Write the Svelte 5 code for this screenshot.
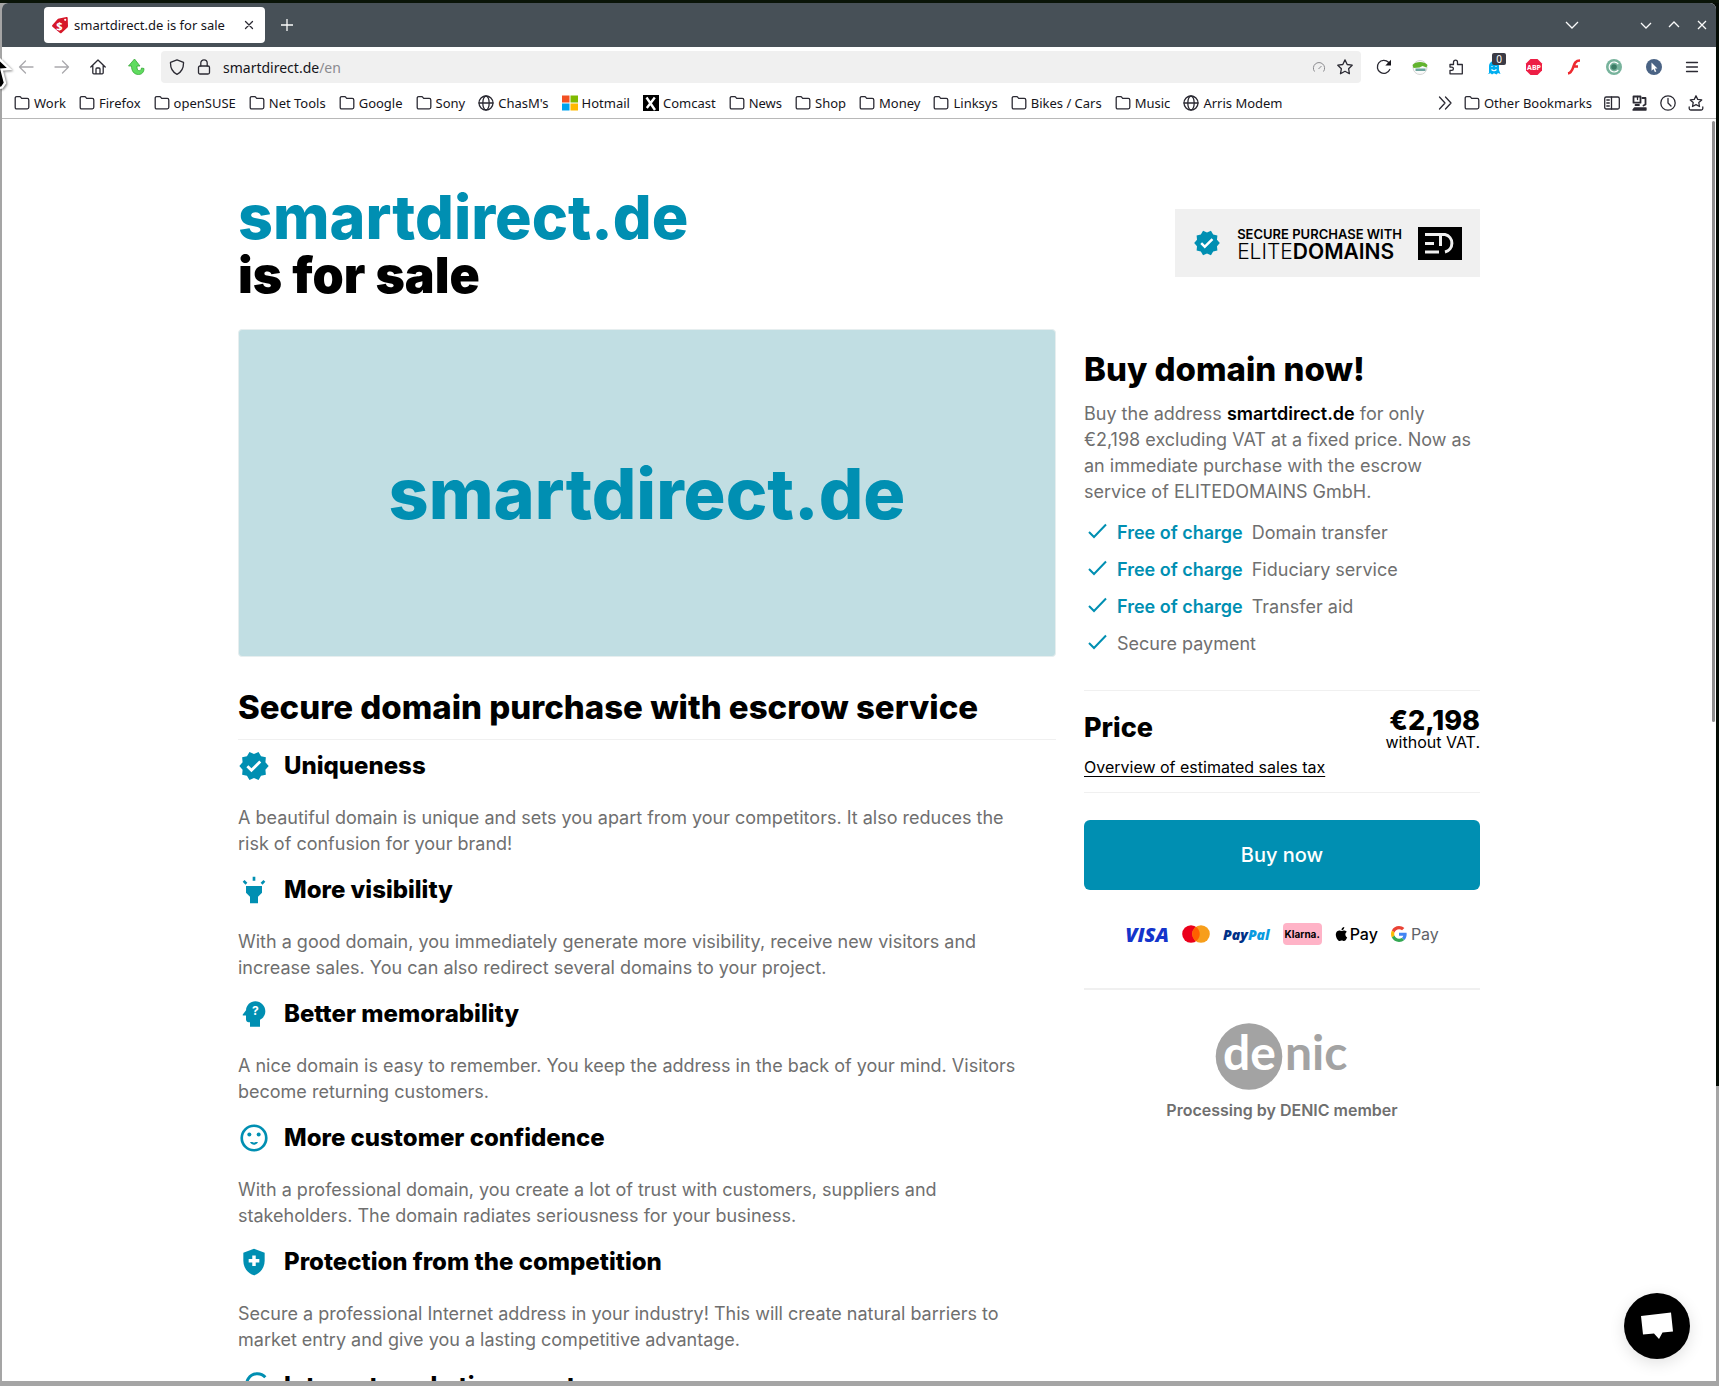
<script>
    const domain = 'smartdirect.de';

    const bookmarks = [
        { name: 'Work' },
        { name: 'Firefox' },
        { name: 'openSUSE' },
        { name: 'Net Tools' },
        { name: 'Google' },
        { name: 'Sony' },
        { name: "ChasM's", icon: 'globe' },
        { name: 'Hotmail', icon: 'windows' },
        { name: 'Comcast', icon: 'comcast' },
        { name: 'News' },
        { name: 'Shop' },
        { name: 'Money' },
        { name: 'Linksys' },
        { name: 'Bikes / Cars' },
        { name: 'Music' },
        { name: 'Arris Modem', icon: 'globe' }
    ];

    const reasons = [
        {
            icon: 'verified',
            title: 'Uniqueness',
            text: 'A beautiful domain is unique and sets you apart from your competitors. It also reduces the risk of confusion for your brand!'
        },
        {
            icon: 'highlight',
            title: 'More visibility',
            text: 'With a good domain, you immediately generate more visibility, receive new visitors and increase sales. You can also redirect several domains to your project.'
        },
        {
            icon: 'mind',
            title: 'Better memorability',
            text: 'A nice domain is easy to remember. You keep the address in the back of your mind. Visitors become returning customers.'
        },
        {
            icon: 'smile',
            title: 'More customer confidence',
            text: 'With a professional domain, you create a lot of trust with customers, suppliers and stakeholders. The domain radiates seriousness for your business.'
        },
        {
            icon: 'shield',
            title: 'Protection from the competition',
            text: 'Secure a professional Internet address in your industry! This will create natural barriers to market entry and give you a lasting competitive advantage.'
        },
        { icon: 'google', title: 'Internet marketing asset', text: '' }
    ];

    const benefits = [
        { free: true, text: 'Domain transfer' },
        { free: true, text: 'Fiduciary service' },
        { free: true, text: 'Transfer aid' },
        { free: false, text: 'Secure payment' }
    ];
</script>

{#snippet verified(size)}
    <svg width={size} height={size} viewBox="0 0 24 24" fill="#008fb2" aria-hidden="true">
        <path d="M23 12l-2.44-2.79.34-3.69-3.61-.82-1.89-3.2L12 2.96 8.6 1.5 6.71 4.69 3.1 5.5l.34 3.7L1 12l2.44 2.79-.34 3.7 3.61.82L8.6 22.5l3.4-1.47 3.4 1.46 1.89-3.19 3.61-.82-.34-3.69L23 12z" />
        <path d="M10.09 16.72l-3.8-3.81 1.48-1.48 2.32 2.33 5.85-5.87 1.48 1.48-7.33 7.35z" fill="#fff" />
    </svg>
{/snippet}

{#snippet folder()}
    <svg class="line" width="16" height="16" viewBox="0 0 16 16" aria-hidden="true">
        <path d="M1.2 3.2q0-1.5 1.5-1.5h3q.8 0 1.2.6l.8 1.1h5.6q1.5 0 1.5 1.5v7.400q0 1.500-1.500 1.500H2.700q-1.500 0-1.500-1.500z" />
    </svg>
{/snippet}

{#snippet bookmarkIcon(name)}
    {#if name === 'globe'}
        <svg class="line" width="16" height="16" viewBox="0 0 16 16" aria-hidden="true">
            <circle cx="8" cy="8" r="7" />
            <ellipse cx="8" cy="8" rx="3.2" ry="7" />
            <path d="M1 8h14" />
        </svg>
    {:else if name === 'windows'}
        <svg width="16" height="16" viewBox="0 0 16 16" aria-hidden="true">
            <path d="M0 .5h7.500v7H0z" fill="#f25022" />
            <path d="M8.500 .5H16v7H8.500z" fill="#7fba00" />
            <path d="M0 8.500h7.500v7H0z" fill="#00a4ef" />
            <path d="M8.500 8.500H16v7H8.500z" fill="#ffb900" />
        </svg>
    {:else if name === 'comcast'}
        <svg width="16" height="16" viewBox="0 0 16 16" aria-hidden="true">
            <path d="M0 0h16v16H0z" />
            <path d="M3.500 2.500 12 15M11.800 2.500l-8 10.500" stroke="#fff" stroke-width="2.400" />
        </svg>
    {:else}
        {@render folder()}
    {/if}
{/snippet}

{#snippet reasonIcon(name)}
    {#if name === 'verified'}
        {@render verified(32)}
    {:else}
        <svg width="32" height="32" viewBox="0 0 24 24" fill="#008fb2" aria-hidden="true">
            {#if name === 'highlight'}
                <path d="M6 14l3 3v5h6v-5l3-3V9H6v5zm5-12h2v3h-2V2zM3.500 5.875L4.914 4.460l2.120 2.122L5.620 7.997zm13.460.71l2.123-2.120 1.414 1.414L18.375 8z" />
            {:else if name === 'mind'}
                <path d="M13 2.500C9.250 2.500 6.200 5.440 6.020 9.140L3.600 12.400c-.25.33-.01.8.4.8H6v3c0 1.100.9 2 2 2h1v3.300h7.500v-5.180c2.360-1.120 4-3.530 4-6.320 0-4.140-3.360-7.500-7.500-7.500z" />
                <text x="13" y="13" class="question">?</text>
            {:else if name === 'smile'}
                <circle cx="12" cy="12" r="9.200" fill="none" stroke="#008fb2" stroke-width="2" />
                <circle cx="8.500" cy="9.300" r="1.500" />
                <circle cx="15.500" cy="9.300" r="1.500" />
                <path d="M9 15c.6 1.300 1.800 2 3 2s2.400-.7 3-2h-1.800c-.7.600-1.700.600-2.400 0z" />
            {:else if name === 'shield'}
                <path d="M12 2 4 5v6.090c0 5.050 3.410 9.760 8 10.910 4.590-1.150 8-5.860 8-10.910V5l-8-3zm4 10.400h-2.700V15h-2.600v-2.600H8V9.800h2.700V7.100h2.600v2.700H16z" />
            {:else}
                <path d="M20.500 5.500A8 8 0 1 0 22.500 11H15" fill="none" stroke="#008fb2" stroke-width="2.200" />
            {/if}
        </svg>
    {/if}
{/snippet}

<div class="desktop">
    <div class="window">
        <div class="titlebar">
            <div class="tab">
                <svg width="18" height="18" viewBox="0 0 18 18" aria-hidden="true">
                    <path d="M8 2.500 15.500 1q1-.2 1.200.8L17 10q0 .8-.5 1.400L10.500 17q-.8.7-1.500 0L1.500 10.800q-.8-.8-.3-1.600L6.500 3.200Q7 2.700 8 2.500z" fill="#d6182a" />
                    <text x="8.500" y="13.500" class="tag-dollar">$</text>
                    <circle cx="14.200" cy="3.800" r="1.100" fill="#fff" />
                </svg>
                <span class="tab-title">{domain} is for sale</span>
                <button type="button" aria-label="Close tab">
                    <svg width="10" height="10" viewBox="0 0 10 10" class="line"><path d="M1.500 1.500l7 7M8.500 1.500l-7 7" /></svg>
                </button>
            </div>
            <button class="new-tab" type="button" aria-label="New tab">
                <svg width="14" height="14" viewBox="0 0 14 14" class="light"><path d="M7 1v12M1 7h12" /></svg>
            </button>
            <button class="list-tabs" type="button" aria-label="List all tabs">
                <svg width="14" height="14" viewBox="0 0 14 14" class="light"><path d="M1 4l6 6 6-6" /></svg>
            </button>
            <button class="win-btn" type="button" aria-label="Minimize">
                <svg width="12" height="12" viewBox="0 0 12 12" class="light"><path d="M1 4l5 5 5-5" /></svg>
            </button>
            <button class="win-btn" type="button" aria-label="Maximize">
                <svg width="12" height="12" viewBox="0 0 12 12" class="light"><path d="M1 8l5-5 5 5" /></svg>
            </button>
            <button class="win-btn" type="button" aria-label="Close window">
                <svg width="12" height="12" viewBox="0 0 12 12" class="light"><path d="M2 2l8 8M10 2l-8 8" /></svg>
            </button>
        </div>

        <div class="toolbar">
            <button type="button" aria-label="Back" class="faded">
                <svg class="line" width="16" height="16" viewBox="0 0 16 16"><path d="M15 8H1.500M7.500 2l-6 6 6 6" /></svg>
            </button>
            <button type="button" aria-label="Forward" class="faded">
                <svg class="line" width="16" height="16" viewBox="0 0 16 16"><path d="M1 8h13.500M8.500 2l6 6-6 6" /></svg>
            </button>
            <button type="button" aria-label="Home">
                <svg class="line" width="16" height="16" viewBox="0 0 16 16"><path d="M.8 8 8 1l7.200 7M2.800 6.500v7.300q0 1 1 1h8.400q1 0 1-1V6.500M6 14.500V10q0-1 1-1h2q1 0 1 1v4.500" /></svg>
            </button>
            <button type="button" aria-label="Up" class="wide">
                <svg width="18" height="18" viewBox="0 0 18 18"><path d="M7.500 1 1.500 8h3c0 5 2.500 8.500 7 8.500 3.500 0 5.500-2.500 5.500-6l-2.500-.5c0 2-1.500 3-3 2.500-1.300-.5-1.500-2-1.500-4.500h3z" fill="#5fdc5f" stroke="#38a838" stroke-width=".8" /></svg>
            </button>
            <div class="urlbar">
                <svg class="line" width="16" height="16" viewBox="0 0 16 16" aria-hidden="true"><path d="M8 .8 14.500 3.300c.2 5-1.700 9.700-6.500 12C3.200 13 1.300 8.300 1.500 3.300z" /></svg>
                <svg class="line" width="16" height="16" viewBox="0 0 16 16" aria-hidden="true"><rect x="2.500" y="7" width="11" height="8" rx="1.500" /><path d="M4.800 7V4a3.200 3.200 0 0 1 6.400 0v3" /></svg>
                <span class="address">{domain}<span>/en</span></span>
                <svg class="gauge" width="14" height="14" viewBox="0 0 14 14" aria-hidden="true"><path d="M2.500 11.500a5.600 5.600 0 1 1 9 0M6.500 9l3-3" /></svg>
                <svg class="line" width="16" height="16" viewBox="0 0 16 16" aria-hidden="true"><path d="M8 .9l2.200 4.600 5 .7-3.600 3.500.8 5L8 12.300l-4.500 2.400.9-5L.8 6.200l5-.7z" /></svg>
            </div>
            <button type="button" aria-label="Reload">
                <svg class="line" width="16" height="16" viewBox="0 0 16 16"><path d="M13.800 10.500A6.500 6.500 0 1 1 12.500 3.300" /><path d="M15 .8v5.700H9.300z" fill="#15141a" stroke="none" /></svg>
            </button>
            <button type="button" aria-label="openSUSE">
                <svg width="16" height="16" viewBox="0 0 16 16"><circle cx="8" cy="8.500" r="7" fill="#fafafa" stroke="#d5d5d5" /><path d="M.5 6c3-4 12-4 15 0l-1 2.500-4-1.500-3 1.500-6 .5z" fill="#62b32e" /><path d="M3.500 9.500h10V12h-10z" fill="#6ba39d" /></svg>
            </button>
            <button type="button" aria-label="Extensions">
                <svg class="line" width="16" height="16" viewBox="0 0 16 16"><path d="M2 5.500h3.500V3.200a2 2 0 0 1 4 0v2.300h4.800v9.300H2v-3.500h1.800a1.600 1.600 0 0 0 0-3.200H2z" /></svg>
            </button>
            <button type="button" aria-label="Ghostery" class="wide ghost">
                <svg width="16" height="16" viewBox="0 0 16 16"><path d="M3 14V7a5 5 0 0 1 10 0v4l1.500 4-2.500-1-1.500 1.500L8 14.200 6 15.500l-1.500-1.200-3 1z" fill="#00aef0" /><path d="M5.500 10.500q2.500 2.500 5 0M6 7v1M10 7v1" fill="none" stroke="#fff" stroke-width="1.100" /></svg>
                <span class="count">0</span>
            </button>
            <button type="button" aria-label="Adblock Plus" class="wide">
                <svg width="18" height="18" viewBox="0 0 18 18"><path d="M5.500 1h7L17 5.500v7L12.500 17h-7L1 12.500v-7z" fill="#ed1e45" /><text x="9" y="11.800" class="abp">ABP</text></svg>
            </button>
            <button type="button" aria-label="Flash" class="wide">
                <svg width="16" height="16" viewBox="0 0 16 16"><path d="M14 1.500c-4.500 0-5.500 3-6.500 6S5.500 14 2 14.500M7 7.500h5" fill="none" stroke="#ee2a30" stroke-width="2.600" /></svg>
            </button>
            <button type="button" aria-label="Cookie manager" class="wide">
                <svg width="16" height="16" viewBox="0 0 16 16"><circle cx="8" cy="8" r="8" fill="#77b39c" /><path d="M12.300 5.200a5 5 0 1 0 0 5.600" fill="none" stroke="#fff" stroke-width="1.200" /><circle cx="8" cy="8" r="2.800" fill="#3c7d66" /></svg>
            </button>
            <button type="button" aria-label="Pointer" class="wide">
                <svg width="16" height="16" viewBox="0 0 16 16"><circle cx="8" cy="8" r="8" fill="#4a6384" /><path d="M5.500 3.500v8.300l2-1.700 1.400 3 1.400-.7-1.400-2.900h2.600z" fill="#fff" /></svg>
            </button>
            <button type="button" aria-label="Menu">
                <svg class="line" width="16" height="16" viewBox="0 0 16 16"><path d="M2.500 3.500h11M2.500 8h11M2.500 12.500h11" /></svg>
            </button>
        </div>

        <nav class="bookmarks" aria-label="Bookmarks">
            {#each bookmarks as bookmark (bookmark.name)}
                <a href="#bookmark">{@render bookmarkIcon(bookmark.icon)}{bookmark.name}</a>
            {/each}
            <div class="bookmarks-end">
                <svg class="line" width="14" height="14" viewBox="0 0 14 14" aria-hidden="true"><path d="M1.500 1l5.500 6-5.500 6M7.500 1l5.500 6-5.500 6" /></svg>
                <a href="#bookmark">{@render folder()}Other Bookmarks</a>
                <svg class="line" width="16" height="16" viewBox="0 0 16 16" aria-hidden="true"><rect x=".7" y="2" width="14.600" height="12" rx="1.500" /><path d="M7.500 2v12M2.800 5h2.500M2.800 8h2.500M2.800 11h2.500" /></svg>
                <svg class="line" width="16" height="16" viewBox="0 0 16 16" aria-hidden="true"><path d="M1.500 1.500h7v6.200h-7zM10.500 3h3v6.500l-2 1M3.500 10h3.500" stroke-width="1.800" /><path d="M5.500 1.500v3" /><path d="M2.500 13h11.500v2h-13z" fill="#2b2a33" /></svg>
                <svg class="line" width="16" height="16" viewBox="0 0 16 16" aria-hidden="true"><circle cx="8" cy="8" r="7.200" /><path d="M8 3.500V8l3 3" /></svg>
                <svg class="line" width="16" height="16" viewBox="0 0 16 16" aria-hidden="true"><path d="M8 .8l1.700 3.600 4 .5-2.900 2.700.7 3.900L8 9.600l-3.500 1.900.7-3.900-2.900-2.700 4-.5zM1.200 12v1.500q0 1.500 1.500 1.500h10.600q1.500 0 1.500-1.500V12" /></svg>
            </div>
        </nav>

        <div class="page">
            <main>
                <header>
                    <h1><span>{domain}</span> is for sale</h1>
                    <div class="seal">
                        {@render verified(28)}
                        <div class="seal-text">
                            <strong>SECURE PURCHASE WITH</strong>
                            <span class="brand">ELITE<b>DOMAINS</b></span>
                        </div>
                        <svg width="44" height="33" viewBox="0 0 44 33" aria-hidden="true">
                            <path d="M0 0h44v33H0z" />
                            <path d="M7 7.500h17.500M7 16.500h9M7 25h14M22.500 8v11M24 7.500h3a9 9 0 0 1 0 17.500" fill="none" stroke="#f0f0f0" stroke-width="3" />
                        </svg>
                    </div>
                </header>

                <div class="columns">
                    <section>
                        <div class="hero">{domain}</div>
                        <h2 class="ruled">Secure domain purchase with escrow service</h2>
                        {#each reasons as reason (reason.title)}
                            <article>
                                <h3>{@render reasonIcon(reason.icon)}{reason.title}</h3>
                                <p>{reason.text}</p>
                            </article>
                        {/each}
                    </section>

                    <aside>
                        <h2>Buy domain now!</h2>
                        <p>
                            Buy the address <strong>{domain}</strong> for only €2,198 excluding VAT at a fixed price. Now as
                            an immediate purchase with the escrow service of ELITEDOMAINS GmbH.
                        </p>
                        <ul>
                            {#each benefits as benefit (benefit.text)}
                                <li>
                                    <svg width="24" height="24" viewBox="0 0 24 24" aria-hidden="true"><path d="M5 11l5 5L22 3.500" /></svg>
                                    {#if benefit.free}<strong>Free of charge</strong>{/if}
                                    <span>{benefit.text}</span>
                                </li>
                            {/each}
                        </ul>

                        <div class="price">
                            <div class="price-row">
                                <h3>Price</h3>
                                <div class="amount"><strong>€2,198</strong><span>without VAT.</span></div>
                            </div>
                            <a href="#tax">Overview of estimated sales tax</a>
                        </div>

                        <button class="buy" type="button">Buy now</button>

                        <div class="payments">
                            <span class="visa">VISA</span>
                            <svg width="28" height="18" viewBox="0 0 28 18" role="img" aria-label="Mastercard">
                                <circle cx="9" cy="9" r="8.800" fill="#eb001b" />
                                <circle cx="19" cy="9" r="8.800" fill="#f79e1b" />
                                <path d="M14 1.800a8.800 8.800 0 0 1 0 14.400 8.800 8.800 0 0 1 0-14.400z" fill="#ff5f00" />
                            </svg>
                            <span class="paypal">Pay<b>Pal</b></span>
                            <span class="klarna">Klarna.</span>
                            <span class="pay">
                                <svg width="13" height="14" viewBox="2 0 20 24" aria-hidden="true"><path d="M12.152 6.896c-.948 0-2.415-1.078-3.960-1.040-2.040.027-3.910 1.183-4.961 3.014-2.117 3.675-.546 9.103 1.519 12.090 1.013 1.454 2.208 3.090 3.792 3.039 1.520-.065 2.090-.987 3.935-.987 1.831 0 2.350.987 3.960.948 1.637-.026 2.676-1.480 3.676-2.948 1.156-1.688 1.636-3.325 1.662-3.415-.039-.013-3.182-1.221-3.220-4.857-.026-3.040 2.480-4.494 2.597-4.559-1.429-2.090-3.623-2.324-4.390-2.376-2-.156-3.675 1.090-4.610 1.090zM15.530 3.830c.843-1.012 1.400-2.427 1.245-3.830-1.207.052-2.662.805-3.532 1.818-.780.896-1.454 2.338-1.273 3.714 1.338.104 2.715-.688 3.559-1.701" /></svg>
                                Pay
                            </span>
                            <span class="pay google">
                                <svg width="16" height="16" viewBox="0 0 48 48" aria-hidden="true">
                                    <path fill="#EA4335" d="M24 9.500c3.540 0 6.710 1.220 9.210 3.600l6.850-6.850C35.900 2.380 30.470 0 24 0 14.620 0 6.510 5.380 2.560 13.220l7.980 6.190C12.430 13.720 17.740 9.500 24 9.500z" />
                                    <path fill="#4285F4" d="M46.980 24.550c0-1.570-.15-3.090-.38-4.550H24v9.020h12.940c-.58 2.960-2.260 5.480-4.780 7.180l7.730 6c4.510-4.180 7.090-10.360 7.090-17.650z" />
                                    <path fill="#FBBC05" d="M10.530 28.590c-.48-1.450-.76-2.990-.76-4.590s.27-3.140.76-4.590l-7.980-6.190C.92 16.460 0 20.120 0 24c0 3.880.92 7.540 2.560 10.780l7.970-6.190z" />
                                    <path fill="#34A853" d="M24 48c6.480 0 11.930-2.130 15.890-5.810l-7.730-6c-2.150 1.450-4.920 2.300-8.160 2.300-6.260 0-11.570-4.220-13.470-9.910l-7.980 6.190C6.510 42.620 14.620 48 24 48z" />
                                </svg>
                                Pay
                            </span>
                        </div>

                        <div class="denic">
                            <svg width="134" height="67" viewBox="0 0 134 67" role="img" aria-label="denic">
                                <circle cx="34" cy="33.500" r="33.300" fill="#a3a3a3" />
                                <g class="denic-word">
                                    <text x="8" y="47" fill="#fff">de</text>
                                    <text x="70" y="47" fill="#a3a3a3">nic</text>
                                </g>
                            </svg>
                            <strong>Processing by DENIC member</strong>
                        </div>
                    </aside>
                </div>
            </main>

            <button class="chat" type="button" aria-label="Chat">
                <svg width="32" height="28" viewBox="0 0 32 28"><path d="M0 4 30 .5l2 19-10.500 1-3.500 6.500-5-5.500-11 1z" fill="#fff" /></svg>
            </button>
            <div class="scroll-thumb"></div>
        </div>
    </div>

    <svg class="pointer" width="15" height="44" viewBox="0 0 15 44" aria-hidden="true">
        <path d="M-10 0 9.500 19 1.500 19.500 5 33 2 37.500-6 39z" stroke="#fff" stroke-width="2.400" />
    </svg>
</div>

<style>
:global(body) {
    margin: 0;
    background: #a9a9a9;
}

.desktop {
    position: relative;
    height: 100vh;
    box-sizing: border-box;
    padding: 3px 3px 5px 2px;
    overflow: hidden;
    background: linear-gradient(#0a1408, #0a1408) top / 100% 3px no-repeat,
        linear-gradient(#050c05, #050c05) top right / 50% 1086px no-repeat,
        #a5a5a5;
    font-family: "Noto Sans", sans-serif;
    color: #15141a;
}

.window {
    height: 100%;
    display: flex;
    flex-direction: column;
    background: #fff;
    border-radius: 6px 6px 0 0;
    overflow: hidden;
}

button {
    display: flex;
    align-items: center;
    justify-content: center;
    padding: 0;
    border: none;
    background: none;
    font: inherit;
    color: inherit;
    cursor: pointer;
}

svg {
    display: block;
    flex: none;
}

.line {
    fill: none;
    stroke: #2b2a33;
    stroke-width: 1.3;
    stroke-linejoin: round;
    stroke-linecap: round;
}

.light {
    fill: none;
    stroke: #fbfbfb;
    stroke-width: 1.3;
}

/* Browser chrome */
.titlebar {
    display: flex;
    align-items: center;
    height: 44px;
    flex: none;
    padding: 0 0 0 42px;
    background: #475057;
}

.tab {
    display: flex;
    align-items: center;
    gap: 5px;
    box-sizing: border-box;
    width: 221px;
    height: 36px;
    padding: 0 11px 0 7px;
    border-radius: 4px;
    background: #fff;
    font-size: 13px;
}

.tab-title {
    flex: 1;
    white-space: nowrap;
}

.tag-dollar {
    fill: #fff;
    font: bold 11px "Noto Sans", sans-serif;
    text-anchor: middle;
}

.new-tab {
    margin-left: 15px;
}

.list-tabs {
    margin-left: auto;
    margin-right: 53px;
}

.win-btn {
    width: 28px;
}

.toolbar {
    display: flex;
    align-items: center;
    height: 40px;
    flex: none;
    padding: 0 6px;
}

.toolbar button {
    width: 36px;
    height: 32px;
    flex: none;
}

.toolbar .wide {
    width: 40px;
}

.faded {
    opacity: 0.4;
}

.urlbar {
    flex: 1;
    display: flex;
    align-items: center;
    gap: 11px;
    height: 32px;
    box-sizing: border-box;
    padding: 0 8px;
    margin: 0 5px;
    border-radius: 4px;
    background: #f0f0f0;
    font-size: 14px;
}

.address {
    flex: 1;
}

.address span {
    color: #8b8b8f;
}

.gauge {
    fill: none;
    stroke: #8b8b8f;
}

.ghost {
    position: relative;
}

.count {
    position: absolute;
    top: 2px;
    right: 8px;
    width: 14px;
    border-radius: 2px;
    background: #3b3b45;
    color: #fff;
    font-size: 10px;
    line-height: 12px;
    text-align: center;
}

.abp {
    fill: #fff;
    font: bold 7px "Noto Sans", sans-serif;
    text-anchor: middle;
}

.bookmarks {
    display: flex;
    align-items: center;
    gap: 13px;
    height: 31px;
    flex: none;
    padding: 0 12px;
    border-bottom: 1px solid #b8b8b8;
    font-size: 13px;
}

.bookmarks a {
    display: flex;
    align-items: center;
    gap: 4px;
    color: inherit;
    text-decoration: none;
    white-space: nowrap;
}

.bookmarks-end {
    display: flex;
    align-items: center;
    gap: 12px;
    margin-left: auto;
}

/* Sale page */
.page {
    position: relative;
    flex: 1;
    min-height: 0;
    overflow: hidden;
    font-family: Inter, "Open Sans", sans-serif;
    color: #000;
}

main {
    max-width: 1242px;
    margin: 0 auto;
    padding-top: 69px;
}

header {
    display: flex;
    align-items: center;
    justify-content: space-between;
    margin-bottom: 25px;
}

h1 {
    margin: 0;
    font-size: 50px;
    line-height: 58px;
    font-weight: 900;
}

h1 span {
    display: block;
    font-size: 61px;
    font-weight: 800;
    color: #008fb2;
}

.seal {
    display: flex;
    align-items: center;
    gap: 16px;
    height: 68px;
    box-sizing: border-box;
    padding: 0 18px;
    margin-bottom: 6px;
    background: #f0f0f0;
}

.seal-text {
    display: flex;
    flex-direction: column;
    padding-top: 2px;
}

.seal-text strong {
    font-size: 13px;
    line-height: 16px;
    font-weight: 600;
}

.brand {
    font-size: 21px;
    line-height: 20px;
    font-weight: 300;
}

.brand b {
    font-weight: 600;
}

.columns {
    display: grid;
    grid-template-columns: minmax(0, 818fr) minmax(0, 396fr);
    gap: 28px;
}

.hero {
    display: flex;
    align-items: center;
    justify-content: center;
    height: 326px;
    border: 1px solid #e6eeef;
    border-radius: 4px;
    background: #c1dee3;
    color: #008fb2;
    font-size: 70px;
    font-weight: 800;
}

h2 {
    margin: 0;
    font-size: 33px;
    line-height: 40px;
    font-weight: 800;
}

.ruled {
    margin-top: 30px;
    margin-bottom: 10px;
    padding-bottom: 12px;
    border-bottom: 1px solid #f0f0f0;
}

article h3 {
    display: flex;
    align-items: center;
    gap: 14px;
    margin: 0 0 23px;
    font-size: 24px;
    line-height: 32px;
    font-weight: 800;
}

.question {
    fill: #fff;
    font: 700 9px Inter, sans-serif;
    text-anchor: middle;
}

p {
    margin: 0;
    color: #6f6f6f;
    font-size: 18px;
    line-height: 26px;
}

article p {
    margin-bottom: 17px;
    padding-right: 20px;
}

aside h2 {
    margin: 20px 0 12px;
}

aside p strong {
    color: #000;
    font-weight: 600;
}

ul {
    margin: 9px 0 28px;
    padding: 0;
    list-style: none;
}

li {
    display: flex;
    align-items: center;
    gap: 9px;
    height: 37px;
    color: #6f6f6f;
    font-size: 18px;
}

li svg {
    fill: none;
    stroke: #008fb2;
    stroke-width: 2;
}

li strong {
    color: #008fb2;
    font-weight: 600;
}

.price {
    padding: 18px 0 13px;
    border: solid #f0f0f0;
    border-width: 1px 0;
}

.price-row {
    display: flex;
    align-items: flex-start;
    justify-content: space-between;
    margin-bottom: 4px;
}

.price h3 {
    margin: 0;
    font-size: 27px;
    line-height: 38px;
    font-weight: 800;
}

.amount {
    display: flex;
    flex-direction: column;
    text-align: right;
    font-size: 16px;
    line-height: 18px;
}

.amount strong {
    font-size: 27px;
    line-height: 24px;
    font-weight: 800;
}

.price a {
    display: block;
    width: fit-content;
    color: #000;
    font-size: 16px;
    line-height: 24px;
    text-underline-offset: 3px;
}

.buy {
    width: 100%;
    height: 70px;
    margin-top: 27px;
    border-radius: 6px;
    background: #008fb2;
    color: #fff;
    font-size: 20px;
    font-weight: 500;
}

.payments {
    display: flex;
    align-items: center;
    justify-content: center;
    gap: 13px;
    height: 22px;
    padding: 33px 0 43px;
    border-bottom: 2px solid #f0f0f0;
}

.visa {
    color: #1434cb;
    font: italic 800 20px "Open Sans", sans-serif;
}

.paypal {
    color: #003087;
    font: italic 800 14px "Open Sans", sans-serif;
}

.paypal b {
    color: #0a9be0;
    font-weight: 800;
}

.klarna {
    width: 39px;
    border-radius: 4px;
    background: #ffb3c7;
    font-size: 10px;
    line-height: 22px;
    font-weight: 700;
    text-align: center;
}

.pay {
    display: flex;
    align-items: center;
    gap: 2px;
    font-size: 16px;
    font-weight: 500;
}

.google {
    gap: 4px;
    color: #5f6368;
    font-weight: 400;
}

.denic {
    display: flex;
    flex-direction: column;
    align-items: center;
    gap: 10px;
    margin-top: 33px;
    color: #6f6f6f;
    font-size: 16px;
    line-height: 20px;
}

.denic strong {
    font-weight: 600;
}

.denic-word {
    font: bold 48px Lato, sans-serif;
}

/* Overlays */
.chat {
    position: absolute;
    right: 26px;
    bottom: 22px;
    width: 66px;
    height: 66px;
    border-radius: 50%;
    background: #000;
    box-shadow: 0 4px 16px rgba(0, 0, 0, 0.12);
}

.scroll-thumb {
    position: absolute;
    top: 2px;
    right: 1px;
    width: 3px;
    height: 601px;
    border-radius: 2px;
    background: #8f8f8f;
}

.pointer {
    position: absolute;
    top: 50px;
    left: 0;
    filter: drop-shadow(1px 1px 1px rgba(0, 0, 0, 0.5));
}
</style>
